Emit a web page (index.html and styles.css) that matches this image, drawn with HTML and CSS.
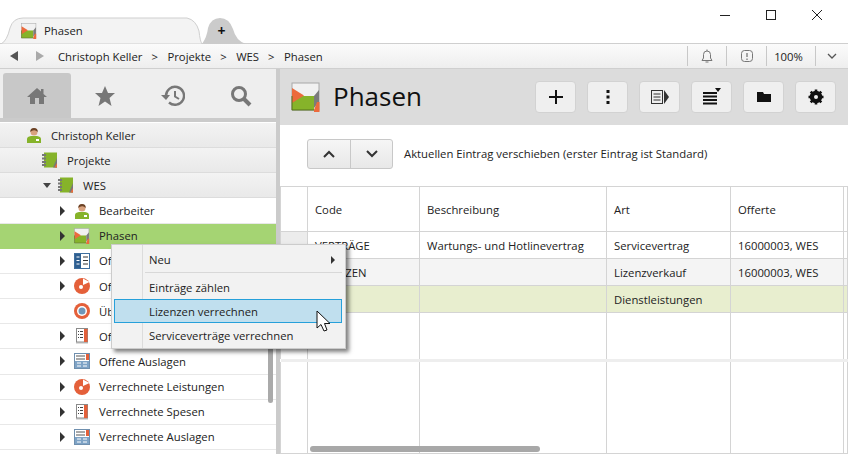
FILE: index.html
```html
<!DOCTYPE html>
<html lang="de">
<head>
    <meta charset="UTF-8">
    <title>Phasen</title>
    <link rel="stylesheet" href="styles.css">
</head>
<body>
    <!-- Icon-Vorlagen -->
    <svg class="defs" width="0" height="0">
        <symbol id="i-phase" viewBox="0 0 30 30">
            <rect x="1" y="1" width="27" height="27" fill="#f1f1f1" stroke="#a8a8a8"/>
            <path d="M1 14H23V28H1Z" fill="#86b32a"/>
            <path d="M1 6L13 13.500L1 21Z" fill="#ec6a3c"/>
            <path d="M23 14L28 8V20L23 26Z" fill="#7b7b7b"/>
            <path d="M23 28L26 20H28.500V30H23Z" fill="#ec6a3c"/>
            <path d="M1 14V28H23" fill="none" stroke="#55701c"/>
        </symbol>
        <symbol id="i-book" viewBox="0 0 16 16">
            <rect x="2" y="0.500" width="13" height="15" fill="#86b32a"/>
            <path d="M11 15.500L15 6V15.500Z" fill="#777"/>
            <path d="M12.500 15.500L15 11V15.500Z" fill="#ec6a3c"/>
            <path d="M0 3H4M0 6.500H4M0 10H4M0 13H4" stroke="#777" stroke-width="1.800"/>
        </symbol>
        <symbol id="i-person" viewBox="0 0 16 16">
            <path d="M1 16V12Q1 9.500 5 9H11Q15 9.500 15 12V16Z" fill="#86b32a"/>
            <circle cx="8" cy="5" r="3.500" fill="#d9a37f"/>
            <path d="M4.300 5Q4 1 8 1T11.700 5Q10 3 8 3.200T4.300 5Z" fill="#6b4226"/>
            <rect x="10" y="12" width="3" height="2" fill="#fff"/>
        </symbol>
        <symbol id="i-report" viewBox="0 0 16 16">
            <rect x="0.500" y="0.500" width="15" height="15" fill="#fff" stroke="#3f6f9f"/>
            <rect x="1" y="1" width="6" height="14" fill="#2f5f90"/>
            <path d="M2.500 4H5.500M2.500 7.500H5.500M2.500 11H5.500" stroke="#fff"/>
            <path d="M9 4H14M9 7.500H14M9 11H14" stroke="#333"/>
        </symbol>
        <symbol id="i-pie" viewBox="0 0 16 16">
            <circle cx="8" cy="8" r="8" fill="#e4603a"/>
            <path d="M9 7V0.500L15.500 4Z" fill="#fff"/>
            <circle cx="7" cy="9" r="2" fill="#fff"/>
        </symbol>
        <symbol id="i-target" viewBox="0 0 16 16">
            <circle cx="8" cy="8" r="8" fill="#e4603a"/>
            <circle cx="8" cy="8" r="5" fill="#fff"/>
            <circle cx="8" cy="8" r="3.500" fill="#6f96b8"/>
        </symbol>
        <symbol id="i-receipt" viewBox="0 0 16 16">
            <rect x="2.500" y="0.500" width="11" height="13.500" fill="#fff" stroke="#8a8a8a"/>
            <rect x="10" y="1" width="3.500" height="13" fill="#e4603a"/>
            <path d="M4 3.500H5M6 3.500H9M4 6.500H5M6 6.500H9M4 9.500H5M6 9.500H9" stroke="#444"/>
            <path d="M2.500 15H13.500" stroke="#777" stroke-dasharray="1 1"/>
        </symbol>
        <symbol id="i-form" viewBox="0 0 16 16">
            <rect x="0.500" y="0.500" width="15" height="15" fill="#fff" stroke="#6f8fae"/>
            <rect x="1" y="8" width="14" height="7" fill="#7ea3c6"/>
            <rect x="12" y="1" width="3" height="6" fill="#e4603a"/>
            <path d="M2 3H11M2 6H11" stroke="#555"/>
            <path d="M3 10H7M9 10H13M3 13H7M9 13H13" stroke="#fff"/>
        </symbol>
    </svg>

    <div class="titlebar">
        <div class="tab">
            <svg class="tab-shape" width="201" height="27" viewBox="0 0 201 27">
                <path d="M0 27Q6 24 9 11Q12 1 22 1H186Q195 3 198 14Q199 24 201 27Z" fill="#f3f3f3" stroke="#cfcfcf"/>
            </svg>
            <svg class="tab-icon" width="16" height="16"><use href="#i-phase"/></svg>
            <span class="tab-text">Phasen</span>
        </div>
        <div class="tab-new">
            <svg class="tab-shape" width="44" height="27" viewBox="0 0 44 27">
                <path d="M0 27Q5 20 6 11Q9 1 18 1Q27 1 31 12Q34 24 44 27Z" fill="#cbcbcb"/>
            </svg>
            <span class="tab-plus">+</span>
        </div>
        <div class="window-buttons">
            <svg width="14" height="14" viewBox="0 0 14 14"><path d="M2 7.500H12" stroke="#222"/></svg>
            <svg width="14" height="14" viewBox="0 0 14 14"><rect x="2.500" y="2.500" width="9" height="9" fill="none" stroke="#222"/></svg>
            <svg width="14" height="14" viewBox="0 0 14 14"><path d="M2 2L12 12M12 2L2 12" stroke="#222"/></svg>
        </div>
    </div>

    <div class="addressbar">
        <span class="nav-arrow nav-back"></span>
        <span class="nav-arrow nav-forward"></span>
        <div class="crumbs">
            <span>Christoph Keller</span><i>&gt;</i>
            <span>Projekte</span><i>&gt;</i>
            <span>WES</span><i>&gt;</i>
            <span>Phasen</span>
        </div>
        <div class="status">
            <div class="status-item status-bell">
                <svg width="14" height="14" viewBox="0 0 14 14"><path d="M2 11.500H12L10.500 9V5.500Q10.500 2 7 2T3.500 5.500V9ZM5.500 13H8.500M7 0.500V2" fill="none" stroke="#777"/></svg>
            </div>
            <div class="status-item status-alert">
                <svg width="14" height="14" viewBox="0 0 14 14"><rect x="1.500" y="1.500" width="11" height="11" rx="3" fill="none" stroke="#777"/><path d="M7 4V8M7 9.500V11" stroke="#555"/></svg>
            </div>
            <div class="status-item status-zoom">100%</div>
            <div class="status-item status-more">
                <svg width="12" height="12" viewBox="0 0 12 12"><path d="M2 4L6 8L10 4" fill="none" stroke="#555" stroke-width="1.300"/></svg>
            </div>
        </div>
    </div>

    <div class="main">
        <div class="sidebar">
            <div class="side-tabs">
                <div class="side-tab active">
                    <svg width="20" height="20" viewBox="0 0 20 20"><path d="M10 2L14 5.500V3H16.500V8L20 11H17V18H12V12H8V18H3V11H0Z" fill="#777"/></svg>
                </div>
                <div class="side-tab">
                    <svg width="22" height="22" viewBox="0 0 22 22"><path d="M11 1L14 8H21L15.500 13L17.500 21L11 16.500L4.500 21L6.500 13L1 8H8Z" fill="#777"/></svg>
                </div>
                <div class="side-tab">
                    <svg width="24" height="22" viewBox="0 0 24 22"><path d="M5 11A9 9 0 1 1 8 17.500" fill="none" stroke="#777" stroke-width="2.400"/><path d="M0 10H9L5 15Z" fill="#777"/><path d="M14 6V11.500L18 14" fill="none" stroke="#777" stroke-width="2"/></svg>
                </div>
                <div class="side-tab">
                    <svg width="22" height="22" viewBox="0 0 22 22"><circle cx="9" cy="9" r="6.500" fill="none" stroke="#777" stroke-width="3"/><path d="M14 14L20 20" stroke="#777" stroke-width="4"/></svg>
                </div>
            </div>
            <div class="tree">
                <div class="row row-head lvl-0"><svg class="row-icon"><use href="#i-person"/></svg>Christoph Keller</div>
                <div class="row row-head lvl-1"><svg class="row-icon"><use href="#i-book"/></svg>Projekte</div>
                <div class="row row-head lvl-2"><span class="arrow arrow-open"></span><svg class="row-icon"><use href="#i-book"/></svg>WES</div>
                <div class="row lvl-3"><span class="arrow"></span><svg class="row-icon"><use href="#i-person"/></svg>Bearbeiter</div>
                <div class="row row-selected lvl-3"><span class="arrow"></span><svg class="row-icon"><use href="#i-phase"/></svg>Phasen</div>
                <div class="row lvl-3"><span class="arrow"></span><svg class="row-icon"><use href="#i-report"/></svg>Offerten</div>
                <div class="row lvl-3"><span class="arrow"></span><svg class="row-icon"><use href="#i-pie"/></svg>Offene</div>
                <div class="row lvl-3"><span class="arrow arrow-none"></span><svg class="row-icon"><use href="#i-target"/></svg>Übersicht</div>
                <div class="row lvl-3"><span class="arrow"></span><svg class="row-icon"><use href="#i-receipt"/></svg>Offene</div>
                <div class="row lvl-3"><span class="arrow"></span><svg class="row-icon"><use href="#i-form"/></svg>Offene Auslagen</div>
                <div class="row lvl-3"><span class="arrow"></span><svg class="row-icon"><use href="#i-pie"/></svg>Verrechnete Leistungen</div>
                <div class="row lvl-3"><span class="arrow"></span><svg class="row-icon"><use href="#i-receipt"/></svg>Verrechnete Spesen</div>
                <div class="row lvl-3"><span class="arrow"></span><svg class="row-icon"><use href="#i-form"/></svg>Verrechnete Auslagen</div>
                <div class="side-scroll"></div>
            </div>
        </div>

        <div class="content">
            <div class="content-head">
                <svg class="head-icon" width="30" height="30"><use href="#i-phase"/></svg>
                <h1>Phasen</h1>
                <div class="toolbar">
                    <button class="tool"><svg width="18" height="18" viewBox="0 0 18 18"><path d="M9 2V16M2 9H16" stroke="#111" stroke-width="2"/></svg></button>
                    <button class="tool"><svg width="18" height="18" viewBox="0 0 18 18"><path d="M9 2V5M9 7.500V10.500M9 13V16" stroke="#111" stroke-width="3"/></svg></button>
                    <button class="tool"><svg width="20" height="18" viewBox="0 0 20 18"><rect x="1.500" y="2.500" width="11" height="13" fill="none" stroke="#333"/><path d="M3.500 6H10.500M3.500 9H10.500M3.500 12H10.500" stroke="#333"/><path d="M14 2L19 9L14 16Z" fill="#333"/></svg></button>
                    <button class="tool"><svg width="20" height="18" viewBox="0 0 20 18"><path d="M1 5H15M1 8.500H15M1 12H15M1 15.500H15" stroke="#111" stroke-width="2"/><path d="M13 0H19L16 4Z" fill="#111"/></svg></button>
                    <button class="tool"><svg width="18" height="18" viewBox="0 0 18 18"><path d="M2 4H8L9 6H16V14H2Z" fill="#111"/></svg></button>
                    <button class="tool"><svg width="18" height="18" viewBox="0 0 18 18"><circle cx="9" cy="9" r="4.500" fill="none" stroke="#111" stroke-width="3.500"/><path d="M9 1.500V16.500M1.500 9H16.500M3.700 3.700L14.300 14.300M14.300 3.700L3.700 14.300" stroke="#111" stroke-width="2.600"/><circle cx="9" cy="9" r="2" fill="#f0f0f0"/></svg></button>
                </div>
            </div>
            <div class="mover">
                <div class="mover-buttons">
                    <button class="mover-btn"><svg width="14" height="10" viewBox="0 0 14 10"><path d="M2 8L7 3L12 8" fill="none" stroke="#333" stroke-width="2"/></svg></button>
                    <button class="mover-btn"><svg width="14" height="10" viewBox="0 0 14 10"><path d="M2 2L7 7L12 2" fill="none" stroke="#333" stroke-width="2"/></svg></button>
                </div>
                <span>Aktuellen Eintrag verschieben (erster Eintrag ist Standard)</span>
            </div>
            <table class="grid">
                <colgroup>
                    <col class="col-a"><col class="col-b"><col class="col-c"><col class="col-d"><col class="col-e"><col>
                </colgroup>
                <tr class="grid-head"><td></td><td>Code</td><td>Beschreibung</td><td>Art</td><td>Offerte</td><td></td></tr>
                <tr class="grid-row"><td class="mark"></td><td>VERTRÄGE</td><td>Wartungs- und Hotlinevertrag</td><td>Servicevertrag</td><td>16000003, WES</td><td></td></tr>
                <tr class="grid-row grid-alt"><td></td><td>LIZENZEN</td><td></td><td>Lizenzverkauf</td><td>16000003, WES</td><td></td></tr>
                <tr class="grid-row grid-current"><td></td><td></td><td></td><td>Dienstleistungen</td><td></td><td></td></tr>
                <tr class="grid-fill"><td></td><td></td><td></td><td></td><td></td><td></td></tr>
                <tr class="grid-band"><td></td><td></td><td></td><td></td><td></td><td></td></tr>
                <tr class="grid-rest"><td></td><td></td><td></td><td></td><td></td><td></td></tr>
            </table>
            <div class="grid-scroll"></div>
        </div>
    </div>

    <!-- Kontextmenü -->
    <div class="menu">
        <div class="menu-item menu-sub">Neu</div>
        <div class="menu-sep"></div>
        <div class="menu-item">Einträge zählen</div>
        <div class="menu-item menu-hover">Lizenzen verrechnen</div>
        <div class="menu-item">Serviceverträge verrechnen</div>
    </div>
    <svg class="pointer" width="18" height="24" viewBox="0 0 18 24">
        <path d="M1 1V18L5 14.500L8 21L11 20L8.500 13.500H14Z" fill="#fff" stroke="#111"/>
    </svg>
</body>
</html>
```

FILE: styles.css
```css
* {
    box-sizing: border-box;
}

body {
    position: relative;
    width: 848px;
    height: 454px;
    margin: 0;
    overflow: hidden;
    background: #fff;
    color: #222;
    font-family: "Open Sans", "Noto Sans", sans-serif;
    font-size: 11.3px;
}

.defs {
    position: absolute;
}

/* Titelleiste */
.titlebar {
    position: relative;
    display: flex;
    align-items: flex-end;
    height: 44px;
    padding-left: 1px;
    border-bottom: 1px solid #cfcfcf;
}

.tab {
    position: relative;
    display: flex;
    align-items: center;
    width: 201px;
    height: 27px;
    margin-bottom: -1px;
    padding-left: 20px;
}

.tab-shape {
    position: absolute;
    top: 0;
    left: 0;
}

.tab-icon {
    position: relative;
    width: 16px;
    height: 16px;
}

.tab-text {
    position: relative;
    margin-left: 7px;
}

.tab-new {
    position: relative;
    display: flex;
    align-items: center;
    justify-content: center;
    width: 44px;
    height: 27px;
    margin-bottom: -1px;
}

.tab-plus {
    position: relative;
    margin-right: 5px;
    color: #111;
    font-size: 14px;
    font-weight: 700;
}

.window-buttons {
    display: flex;
    gap: 32px;
    align-self: flex-start;
    margin-left: auto;
    margin-right: 24px;
    padding-top: 8px;
}

/* Adressleiste */
.addressbar {
    display: flex;
    align-items: center;
    height: 25px;
    padding-left: 10px;
    background: linear-gradient(#fbfbfb, #eeeeee);
    border-bottom: 1px solid #cfcfcf;
}

.nav-arrow {
    width: 0;
    height: 0;
    border-top: 5px solid transparent;
    border-bottom: 5px solid transparent;
}

.nav-back {
    border-right: 8px solid #555;
}

.nav-forward {
    margin-left: 18px;
    border-left: 8px solid #aaa;
}

.crumbs {
    display: flex;
    margin-left: 14px;
}

.crumbs i {
    width: 16px;
    margin: 0 0 0 9px;
    font-style: normal;
}

.status {
    display: flex;
    align-items: center;
    height: 20px;
    margin-left: auto;
}

.status-item {
    display: flex;
    align-items: center;
    justify-content: center;
    height: 20px;
    border-left: 1px solid #c8c8c8;
}

.status-bell,
.status-alert {
    width: 39px;
}

.status-alert {
    width: 40px;
}

.status-zoom {
    width: 49px;
    padding-right: 5px;
}

.status-more {
    width: 33px;
}

/* Hauptbereich */
.main {
    display: flex;
    height: 385px;
}

.sidebar {
    display: flex;
    flex-direction: column;
    width: 280px;
    border-right: 4px solid #cbcbcb;
}

.side-tabs {
    display: flex;
    height: 53px;
    padding: 4px 1px 0 3px;
    background: #eeeeee;
    border-bottom: 4px solid #cbcbcb;
}

.side-tab {
    display: flex;
    align-items: center;
    justify-content: center;
    flex: 1;
}

.side-tab.active {
    background: #c8c8c8;
    border-radius: 3px 3px 0 0;
}

.tree {
    position: relative;
    flex: 1;
    padding-top: 1px;
    background: #fff;
}

.row {
    display: flex;
    align-items: center;
    height: 25.17px;
    border-bottom: 1px solid #e8e8e8;
}

.row-head {
    background: linear-gradient(#f3f3f3, #e9e9e9);
    border-bottom: 1px solid #dcdcdc;
}

.row-selected {
    background: #a5d473;
    border-bottom-color: #a5d473;
}

.lvl-0 {
    padding-left: 26px;
}

.lvl-1 {
    padding-left: 42px;
}

.lvl-2 {
    padding-left: 43px;
}

.lvl-3 {
    padding-left: 60px;
}

.row-icon {
    flex: none;
    width: 16px;
    height: 16px;
    margin-right: 9px;
}

.arrow {
    width: 0;
    height: 0;
    margin-right: 9px;
    border-top: 5px solid transparent;
    border-bottom: 5px solid transparent;
    border-left: 5px solid #333;
}

.arrow-none {
    border-left-color: transparent;
}

.arrow-open {
    margin-right: 7px;
    border-top: 5px solid #444;
    border-right: 4px solid transparent;
    border-bottom: 0;
    border-left: 4px solid transparent;
}

.side-scroll {
    position: absolute;
    top: 178px;
    right: 3px;
    width: 5px;
    height: 103px;
    background: #aaaaaa;
    border-radius: 3px;
}

/* Inhalt */
.content {
    position: relative;
    flex: 1;
    min-width: 0;
}

.content-head {
    display: flex;
    align-items: center;
    height: 56px;
    padding: 0 12px 0 11px;
    background: #dcdcdc;
}

.head-icon {
    flex: none;
}

.content-head h1 {
    margin: 0 0 2px 12px;
    color: #111;
    font-size: 26px;
    font-weight: 400;
}

.toolbar {
    display: flex;
    gap: 11px;
    margin-left: auto;
}

.tool {
    display: flex;
    align-items: center;
    justify-content: center;
    width: 41px;
    height: 32px;
    padding: 0;
    background: #efefef;
    border: 1px solid #d2d2d2;
    border-radius: 4px;
}

.mover {
    display: flex;
    align-items: center;
    gap: 11px;
    height: 61px;
    padding: 0 0 4px 27px;
}

.mover-buttons {
    display: flex;
    height: 30px;
    background: linear-gradient(#f6f6f6, #e8e8e8);
    border: 1px solid #c8c8c8;
    border-radius: 3px;
}

.mover-btn {
    display: flex;
    align-items: center;
    justify-content: center;
    width: 42px;
    padding: 0;
    background: none;
    border: 0;
}

.mover-btn + .mover-btn {
    border-left: 1px solid #c8c8c8;
}

.grid {
    width: 568px;
    height: 267px;
    table-layout: fixed;
    border-collapse: collapse;
}

.col-a {
    width: 27px;
}

.col-b {
    width: 112px;
}

.col-c {
    width: 187px;
}

.col-d {
    width: 124px;
}

.col-e {
    width: 113px;
}

.grid td {
    padding: 0 0 0 7px;
    border: 1px solid #d4d4d4;
    white-space: nowrap;
}

.grid-head {
    height: 45px;
}

.grid-row {
    height: 27px;
}

.grid-alt td {
    background: #f4f4f4;
}

.grid-current td {
    background: #e8eecf;
}

.mark {
    background: #ececec;
}

.grid-fill {
    height: 46px;
}

.grid .grid-fill td {
    border-bottom: 0;
}

.grid-band {
    height: 3px;
}

.grid .grid-band td {
    padding: 0;
    background: #eeeeee;
    border: 0;
}

.grid-rest {
    height: 92px;
}

.grid .grid-rest td {
    border-top: 0;
    border-bottom: 2px solid #d4d4d4;
}

.grid-scroll {
    position: absolute;
    bottom: 2px;
    left: 30px;
    width: 230px;
    height: 6px;
    background: #a8a8a8;
    border-radius: 3px;
}

/* Kontextmenü */
.menu {
    position: absolute;
    top: 244px;
    left: 111px;
    width: 235px;
    height: 105px;
    padding: 3px 3px 3px 2px;
    background: linear-gradient(to right, #f2f2f2 30px, #dcdcdc 30px, #dcdcdc 31px, #f2f2f2 31px);
    border: 1px solid #cccccc;
    box-shadow: 3px 3px 4px rgba(0, 0, 0, 0.5);
}

.menu-item {
    position: relative;
    display: flex;
    align-items: center;
    height: 24px;
    padding-left: 34px;
    border: 1px solid transparent;
}

.menu-hover {
    background: #c0dfee;
    border-color: #26a0da;
}

.menu-sub {
    height: 23px;
}

.menu-sub::after {
    content: "";
    position: absolute;
    top: 7px;
    right: 6px;
    border-top: 4px solid transparent;
    border-bottom: 4px solid transparent;
    border-left: 4px solid #333;
}

.menu-sep {
    height: 1px;
    margin: 1px 0 2px 31px;
    background: #d8d8d8;
}

.pointer {
    position: absolute;
    top: 310px;
    left: 316px;
}
```
